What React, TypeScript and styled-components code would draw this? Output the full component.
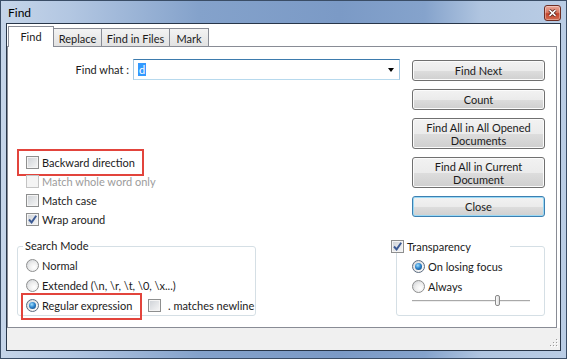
import styled, { createGlobalStyle, css } from "styled-components";

const GlobalStyle = createGlobalStyle`
  html, body {
    margin: 0;
    padding: 0;
    background: #ffffff;
  }
  body {
    font-family: Lato, "Liberation Sans", sans-serif;
    font-size: 11px;
    color: #1b1b1b;
  }
  * {
    box-sizing: border-box;
  }
`;

const Window = styled.div`
  width: 567px;
  height: 359px;
  border: 1px solid #3a4d66;
  background: linear-gradient(
    90deg,
    #c5d5e9 0%,
    #b3c7e2 12%,
    #84a2cb 35%,
    #7b9ac6 60%,
    #85a3cc 75%,
    #b0c5e0 85%,
    #bacde5 100%
  );
  padding: 0 5px 7px;
  display: flex;
  flex-direction: column;
`;

const TitleBar = styled.div`
  height: 22px;
  display: flex;
  align-items: center;
  justify-content: space-between;
  padding: 0 0 0 2px;
`;

const Caption = styled.span`
  font-size: 12px;
  color: #000000;
`;

const CloseBox = styled.div`
  width: 17px;
  height: 16px;
  align-self: flex-start;
  margin-top: 4px;
  border: 1px solid #6e2e24;
  border-radius: 3px;
  background: linear-gradient(#eba798 0%, #d97a64 45%, #c4452d 55%, #d26a4e 100%);
  box-shadow: inset 0 0 0 1px rgba(255, 255, 255, 0.35);
  display: flex;
  align-items: center;
  justify-content: center;
`;

const Client = styled.div`
  flex: 1;
  border: 1px solid #283649;
  background: #ffffff;
  display: flex;
  flex-direction: column;
`;

const TabStrip = styled.div`
  height: 22px;
  display: flex;
  align-items: flex-start;
  padding: 2px 0 0 1px;
`;

const Tab = styled.div<{ $active?: boolean; $w: number }>`
  width: ${(p) => p.$w}px;
  display: flex;
  align-items: center;
  justify-content: center;
  border: 1px solid #898c95;
  border-bottom: none;
  ${(p) =>
    p.$active
      ? css`
          height: 21px;
          padding-bottom: 2px;
          background: #ffffff;
          position: relative;
          z-index: 1;
        `
      : css`
          height: 18px;
          margin-top: 2px;
          margin-left: -1px;
          padding-top: 2px;
          background: linear-gradient(#f3f3f3, #e2e2e2);
        `}
`;

const Panel = styled.div`
  height: 282px;
  margin-right: 3px;
  border: 1px solid #898c95;
  display: flex;
  flex-direction: column;
`;

const Top = styled.div`
  display: flex;
  justify-content: space-between;
  padding-right: 11px;
`;

const LeftCol = styled.div`
  display: flex;
  flex-direction: column;
  padding-top: 12px;
`;

const FindRow = styled.div`
  display: flex;
  align-items: center;
`;

const FieldLabel = styled.span`
  width: 121px;
  margin-right: 4px;
  text-align: right;
`;

const Combo = styled.div`
  width: 267px;
  height: 21px;
  border: 1px solid;
  border-color: #3d7bad #a4c9e3 #b7d9ed #a4c9e3;
  display: flex;
  align-items: center;
  padding: 0 5px 0 4px;
`;

const Selected = styled.span`
  background: #3399ff;
  color: #ffffff;
  padding: 0 1px;
  line-height: 13px;
`;

const Arrow = styled.span`
  margin-left: auto;
  border-left: 3.5px solid transparent;
  border-right: 3.5px solid transparent;
  border-top: 4px solid #000000;
`;

const Options = styled.div`
  margin-top: 73px;
  padding-left: 18px;
  display: flex;
  flex-direction: column;
`;

const Option = styled.div<{
  $dim?: boolean;
  $h?: number;
  $gap?: number;
  $w?: number;
  $mark?: number[];
}>`
  display: flex;
  align-items: center;
  flex: none;
  width: ${(p) => (p.$w ? `${p.$w}px` : "fit-content")};
  height: ${(p) => p.$h ?? 19}px;
  gap: ${(p) => p.$gap ?? 3}px;
  position: relative;
  white-space: nowrap;
  color: ${(p) => (p.$dim ? "#9c9c9c" : "inherit")};
  ${(p) =>
    p.$mark &&
    css`
      &::after {
        content: "";
        position: absolute;
        top: ${p.$mark[0]}px;
        left: ${p.$mark[1]}px;
        width: ${p.$mark[2]}px;
        height: ${p.$mark[3]}px;
        border: 2px solid #e2443c;
      }
    `}
`;

const Box = styled.span<{ $dim?: boolean }>`
  width: 13px;
  height: 13px;
  flex: none;
  border: 1px solid ${(p) => (p.$dim ? "#c4c4c4" : "#8e8f8f")};
  background: ${(p) =>
    p.$dim ? "#f4f4f4" : "linear-gradient(135deg, #cdd1d6, #f7f7f7)"};
  box-shadow: inset 0 0 0 1px #f4f4f4;
  display: flex;
  align-items: center;
  justify-content: center;
`;

const Radio = styled.span<{ $on?: boolean }>`
  width: 13px;
  height: 13px;
  flex: none;
  border-radius: 50%;
  border: 1px solid ${(p) => (p.$on ? "#5c6c80" : "#8e8f8f")};
  background: radial-gradient(circle at 65% 65%, #ffffff 0%, #eeeeee 45%, #c8ccd1 100%);
  display: flex;
  align-items: center;
  justify-content: center;
  &::after {
    content: "";
    display: ${(p) => (p.$on ? "block" : "none")};
    width: 7px;
    height: 7px;
    border-radius: 50%;
    background: radial-gradient(circle at 40% 35%, #9fe0ff 0%, #2f86cf 45%, #0c3a6c 100%);
  }
`;

const Buttons = styled.div`
  width: 133px;
  margin-top: 13px;
  display: flex;
  flex-direction: column;
  gap: 8px;
`;

const Button = styled.div<{ $h?: number; $default?: boolean }>`
  height: ${(p) => p.$h ?? 21}px;
  border: 1px solid ${(p) => (p.$default ? "#3c7fb1" : "#707070")};
  border-radius: 3px;
  background: linear-gradient(#f2f2f2 0%, #ebebeb 50%, #dddddd 51%, #cfcfcf 100%);
  box-shadow: inset 0 0 0 1px ${(p) => (p.$default ? "#9ad9f5" : "#fbfbfb")};
  display: flex;
  align-items: center;
  justify-content: center;
  text-align: center;
  line-height: 13px;
`;

const Groups = styled.div`
  margin-top: 17px;
  display: flex;
  justify-content: space-between;
  align-items: flex-start;
  padding: 0 11px 0 9px;
`;

const Group = styled.div<{ $w: number; $pad: number }>`
  width: ${(p) => p.$w}px;
  height: 70px;
  border: 1px solid #d5dfe5;
  border-radius: 3px;
  padding-left: ${(p) => p.$pad}px;
  display: flex;
  flex-direction: column;
`;

const Legend = styled.div<{ $shift: number; $w?: number }>`
  height: 14px;
  margin: -8px 0 3px ${(p) => p.$shift}px;
  width: ${(p) => (p.$w ? `${p.$w}px` : "fit-content")};
  padding: 0 2px 0 0;
  background: #ffffff;
  display: flex;
  align-items: center;
  gap: 3px;
`;

const LegendText = styled.span`
  padding-left: 2px;
`;

const RadioLine = styled.div`
  display: flex;
  align-items: center;
`;

const Track = styled.div`
  width: 118px;
  height: 2px;
  margin-top: 4px;
  border-top: 1px solid #a9a9a9;
  border-bottom: 1px solid #eeeeee;
  position: relative;
`;

const Thumb = styled.span`
  position: absolute;
  left: 83px;
  top: -6px;
  width: 5px;
  height: 11px;
  border: 1px solid #8a8a8a;
  border-radius: 2px;
  background: linear-gradient(90deg, #fdfdfd, #dcdcdc);
`;

const Footer = styled.div`
  height: 22px;
  background: #f0f0f0;
  display: flex;
  justify-content: flex-end;
  align-items: flex-end;
  padding: 0 2px 3px 0;
`;

const Check = () => (
  <svg width="11" height="11" viewBox="0 0 11 11">
    <polyline points="2,5.5 4.6,8.4 9.2,1.8" fill="none" stroke="#3b5a94" strokeWidth="1.9" />
  </svg>
);

const gripDots = [
  [6, 0],
  [3, 3],
  [6, 3],
  [0, 6],
  [3, 6],
  [6, 6],
];

export default function App() {
  return (
    <>
      <GlobalStyle />
      <Window>
        <TitleBar>
          <Caption>Find</Caption>
          <CloseBox>
            <svg width="9" height="8" viewBox="0 0 9 8">
              <path d="M1.5 1.2 L7.5 6.8 M7.5 1.2 L1.5 6.8" stroke="#4a1a14" strokeWidth="3.2" />
              <path d="M1.5 1.2 L7.5 6.8 M7.5 1.2 L1.5 6.8" stroke="#ffffff" strokeWidth="1.6" />
            </svg>
          </CloseBox>
        </TitleBar>
        <Client>
          <TabStrip>
            <Tab $active $w={46}>Find</Tab>
            <Tab $w={49}>Replace</Tab>
            <Tab $w={69}>Find in Files</Tab>
            <Tab $w={40}>Mark</Tab>
          </TabStrip>
          <Panel>
            <Top>
              <LeftCol>
                <FindRow>
                  <FieldLabel>Find what :</FieldLabel>
                  <Combo>
                    <Selected>d</Selected>
                    <Arrow />
                  </Combo>
                </FindRow>
                <Options>
                  <Option $mark={[-4, -9, 123, 23]}>
                    <Box />
                    Backward direction
                  </Option>
                  <Option $dim>
                    <Box $dim />
                    Match whole word only
                  </Option>
                  <Option>
                    <Box />
                    Match case
                  </Option>
                  <Option>
                    <Box>
                      <Check />
                    </Box>
                    Wrap around
                  </Option>
                </Options>
              </LeftCol>
              <Buttons>
                <Button>Find Next</Button>
                <Button>Count</Button>
                <Button $h={31}>
                  Find All in All Opened
                  <br />
                  Documents
                </Button>
                <Button $h={31}>
                  Find All in Current
                  <br />
                  Document
                </Button>
                <Button $default>Close</Button>
              </Buttons>
            </Top>
            <Groups>
              <Group $w={239} $pad={8}>
                <Legend $shift={-3}>
                  <LegendText>Search Mode</LegendText>
                </Legend>
                <Option $h={20}>
                  <Radio />
                  Normal
                </Option>
                <Option $h={20}>
                  <Radio />
                  Extended (\n, \r, \t, \0, \x...)
                </Option>
                <RadioLine>
                  <Option $h={20} $w={122} $mark={[-2, -5, 117, 23]}>
                    <Radio $on />
                    Regular expression
                  </Option>
                  <Option $h={20} $gap={7}>
                    <Box />. matches newline
                  </Option>
                </RadioLine>
              </Group>
              <Group $w={149} $pad={15}>
                <Legend $shift={-21} $w={119}>
                  <Box>
                    <Check />
                  </Box>
                  Transparency
                </Legend>
                <Option $h={20}>
                  <Radio $on />
                  On losing focus
                </Option>
                <Option $h={20}>
                  <Radio />
                  Always
                </Option>
                <Track>
                  <Thumb />
                </Track>
              </Group>
            </Groups>
          </Panel>
          <Footer>
            <svg width="8" height="8" viewBox="0 0 8 8">
              {gripDots.map(([x, y]) => (
                <g key={`${x}-${y}`}>
                  <rect x={x + 1} y={y + 1} width="1" height="1" fill="#ffffff" />
                  <rect x={x} y={y} width="1" height="1" fill="#9a9a9a" />
                </g>
              ))}
            </svg>
          </Footer>
        </Client>
      </Window>
    </>
  );
}
